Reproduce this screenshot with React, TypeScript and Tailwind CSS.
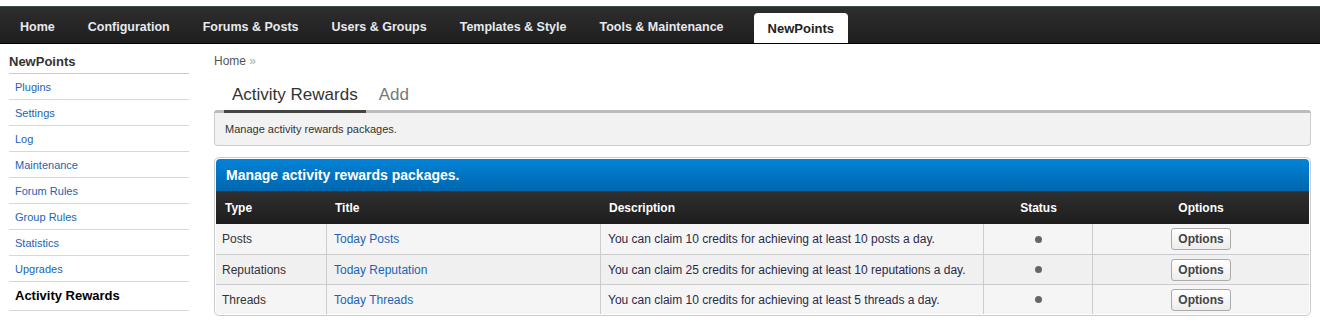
import { useState } from 'react';

const NAV = ['Home', 'Configuration', 'Forums & Posts', 'Users & Groups', 'Templates & Style', 'Tools & Maintenance'];

const SIDE = ['Plugins', 'Settings', 'Log', 'Maintenance', 'Forum Rules', 'Group Rules', 'Statistics', 'Upgrades'];

const ROWS = [
  { type: 'Posts', title: 'Today Posts', desc: 'You can claim 10 credits for achieving at least 10 posts a day.' },
  { type: 'Reputations', title: 'Today Reputation', desc: 'You can claim 25 credits for achieving at least 10 reputations a day.' },
  { type: 'Threads', title: 'Today Threads', desc: 'You can claim 10 credits for achieving at least 5 threads a day.' },
];

export default function App() {
  const [active] = useState('NewPoints');

  return (
    <div className="min-h-screen bg-white pt-[6px] font-['Liberation_Sans',Arial,sans-serif] text-[#333]">
      {/* top menu */}
      <div className="h-[38px] border-t border-t-[#3b4a43] border-b border-b-black bg-gradient-to-b from-[#2e2e2e] to-[#1e1e1e] flex items-end pl-[4px]">
        {NAV.map((n) => (
          <div key={n} className="h-full flex items-center pt-[4px] px-[16px] mr-[1px] text-[12.5px] font-bold text-[#e6e9ee] cursor-pointer">
            {n}
          </div>
        ))}
        <div className="ml-[13px] h-[30px] px-[14px] pt-[1px] bg-white rounded-t-[4px] flex items-center text-[13px] font-bold text-[#222]">
          {active}
        </div>
      </div>

      <div className="flex px-[9px] gap-[25px]">
        {/* sidebar */}
        <aside className="w-[180px] shrink-0 pt-[10px]">
          <div className="text-[13px] leading-[15px] font-bold text-[#333] pb-[4px] border-b border-[#ccc]">NewPoints</div>
          {SIDE.map((s) => (
            <div key={s} className="h-[26px] flex items-center pt-[1px] pl-[6px] text-[11px] text-[#1b64b5] border-b border-[#d8d8d8]">
              {s}
            </div>
          ))}
          <div className="h-[29px] flex items-center pl-[6px] text-[13px] font-bold text-black border-b border-[#d8d8d8]">
            Activity Rewards
          </div>
        </aside>

        {/* main */}
        <main className="flex-1 min-w-0 pt-[10px]">
          <div className="text-[12px] text-[#555] leading-[14px]">
            Home <span className="text-[#aaa]">»</span>
          </div>
          <div className="flex items-end h-[32px] mt-[10px] pl-[18px] gap-[21px] text-[17px]">
            <span className="text-[#333] pb-[3px]">Activity Rewards</span>
            <span className="text-[#777] pb-[3px]">Add</span>
          </div>
          <div className="h-[3px] bg-[#bbb] rounded-tl-[3px] rounded-tr-[3px] flex">
            <div className="ml-[10px] w-[142px] bg-[#444]" />
          </div>
          <div className="h-[33px] bg-[#f2f2f2] border border-t-0 border-[#ccc] rounded-b-[4px] flex items-center px-[10px] text-[11px] text-[#333]">
            Manage activity rewards packages.
          </div>

          {/* table */}
          <div className="mt-[11px] border border-[#ccc] rounded-[5px] overflow-hidden p-[1px]">
            <div className="h-[33px] rounded-t-[4px] bg-gradient-to-b from-[#0284d8] to-[#0066ae] flex items-center pt-[1px] px-[10px] text-[14px] font-bold text-white border-b border-[#2c3d36]">
              Manage activity rewards packages.
            </div>
            <div className="grid grid-cols-[111px_274px_383px_109px_1fr] h-[32px] bg-gradient-to-b from-[#2f2f2f] to-[#1d1d1d] items-center text-[12px] font-bold text-white">
              <div className="pl-[9px]">Type</div>
              <div className="pl-[8px]">Title</div>
              <div className="pl-[8px]">Description</div>
              <div className="text-center">Status</div>
              <div className="text-center">Options</div>
            </div>
            {ROWS.map((r, i) => (
              <div
                key={r.type}
                className={`grid grid-cols-[111px_274px_383px_109px_1fr] h-[30px] text-[12px] ${i % 2 === 0 ? 'bg-[#f5f5f5]' : 'bg-[#f0f0f0]'} ${i > 0 ? 'border-t border-[#ccc]' : ''}`}
              >
                <div className="flex items-center pl-[6px] border-r border-[#ccc]">{r.type}</div>
                <div className="flex items-center pl-[7px] text-[#1b64b5] border-r border-[#ccc]">{r.title}</div>
                <div className="flex items-center pl-[7px] text-[#2a2a4a] border-r border-[#ccc]">{r.desc}</div>
                <div className="flex items-center justify-center border-r border-[#ccc]">
                  <span className="w-[7px] h-[7px] rounded-full bg-[#666]" />
                </div>
                <div className="flex items-center justify-center">
                  <button className="h-[22px] px-[6px] rounded-[3px] border border-[#aaa] bg-gradient-to-b from-white to-[#ececec] text-[12px] font-bold text-[#444]">
                    Options
                  </button>
                </div>
              </div>
            ))}
          </div>
        </main>
      </div>
    </div>
  );
}
